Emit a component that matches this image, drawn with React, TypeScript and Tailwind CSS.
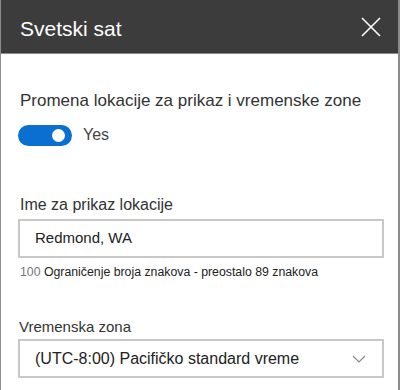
import React from "react";

function CloseIcon() {
  return (
    <svg width="20" height="20" viewBox="0 0 20 20" className="block">
      <path d="M1 1 L19 19 M19 1 L1 19" stroke="#fff" strokeWidth="1.6" fill="none" />
    </svg>
  );
}

function Chevron() {
  return (
    <svg width="14" height="8" viewBox="0 0 14 8" className="block">
      <path d="M1 1 L7 7 L13 1" stroke="#8a8a8a" strokeWidth="1.2" fill="none" />
    </svg>
  );
}

export default function App() {
  return (
    <div
      className="w-[400px] h-[390px] overflow-hidden bg-white border-l border-r-2 border-[#8c8c8c] text-[#333]"
      style={{ fontFamily: '"Liberation Sans", Arial, sans-serif' }}
    >
      <div className="h-[54px] bg-[#3c3c3c] border-b border-[#8a8a8a] flex items-center justify-between pl-[19px] pr-[17px]">
        <div className="text-white text-[21px] leading-none pt-[4px]">Svetski sat</div>
        <CloseIcon />
      </div>

      <div className="pl-[19px] pr-[15px]">
        <div className="mt-[37px] text-[17px] leading-[20px]">Promena lokacije za prikaz i vremenske zone</div>
        <div className="mt-[12px] flex items-center gap-[11px]">
          <div className="-ml-[2px] w-[54px] h-[21px] rounded-full bg-[#0a6fd0] flex items-center justify-end pr-[7px]">
            <div className="w-[13px] h-[13px] rounded-full bg-white" />
          </div>
          <span className="text-[16px] text-[#444]">Yes</span>
        </div>

        <div className="mt-[48px] text-[16px] leading-[20px]">Ime za prikaz lokacije</div>
        <div className="-ml-[2px] mt-[4px] h-[39px] w-[366px] border-2 border-[#c8c8c8] flex items-center pl-[15px] text-[15px] text-[#222]">
          Redmond, WA
        </div>
        <div className="mt-[6px] text-[12.3px] leading-[16px]">
          <span className="text-[#777]">100 </span>
          <span className="text-[#222]">Ograničenje broja znakova - preostalo 89 znakova</span>
        </div>

        <div className="-ml-[1px] mt-[38px] text-[15px] leading-[18px]">Vremenska zona</div>
        <div className="-ml-[2px] mt-[3px] h-[39px] w-[366px] border-2 border-[#c8c8c8] flex items-center justify-between pl-[15px] pr-[16px] text-[16px] text-[#222]">
          <span>(UTC-8:00) Pacifičko standard vreme</span>
          <Chevron />
        </div>
      </div>
    </div>
  );
}
